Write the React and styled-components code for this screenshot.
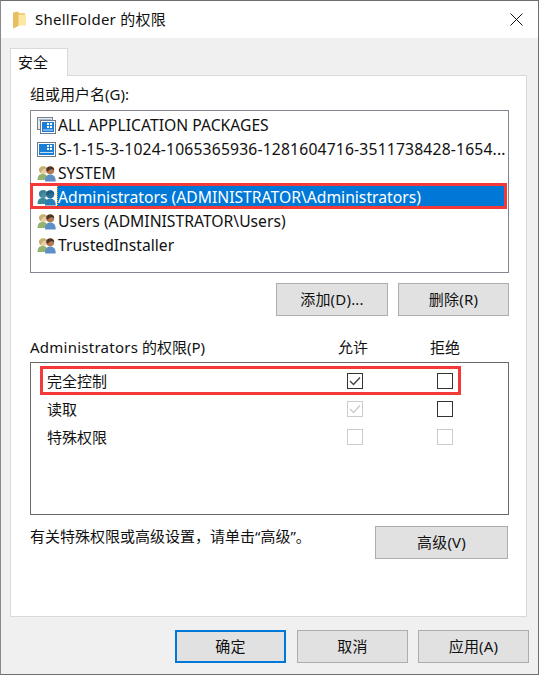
import React from "react";
import styled, { createGlobalStyle } from "styled-components";

const GlobalStyle = createGlobalStyle`
  html, body {
    margin: 0;
    padding: 0;
    background: #f0f0f0;
  }
  * {
    box-sizing: border-box;
  }
`;

const Win = styled.div`
  width: 539px;
  height: 675px;
  display: flex;
  flex-direction: column;
  background: #f0f0f0;
  border: 1px solid #6e6e6e;
  border-left-color: #8a8a8a;
  font-family: "Noto Sans", "Noto Sans CJK SC", sans-serif;
  font-size: 15px;
  color: #111;
  overflow: hidden;
`;

const TitleBar = styled.div`
  height: 37px;
  flex: none;
  display: flex;
  align-items: center;
  background: #fff;
  padding: 0 15px 0 12px;
`;

const TitleText = styled.span`
  margin: -2px 0 0 9px;
  font-size: 15px;
  letter-spacing: 0.25px;
`;

const CloseBtn = styled.svg`
  margin-left: auto;
  width: 13px;
  height: 13px;
`;

const Body = styled.div`
  flex: 1;
  display: flex;
  flex-direction: column;
  padding: 10px 11px 0 9px;
`;

const TabRow = styled.div`
  height: 28px;
  display: flex;
  flex: none;
`;

const Tab = styled.div`
  width: 58px;
  height: 28px;
  background: #fff;
  border: 1px solid #d9d9d9;
  border-bottom: none;
  display: flex;
  align-items: center;
  padding: 0 0 2px 7px;
  position: relative;
  z-index: 1;
`;

const Panel = styled.div`
  height: 542px;
  flex: none;
  background: #fff;
  border: 1px solid #d9d9d9;
  margin-top: -1px;
  padding: 6px 17px 0 19px;
  display: flex;
  flex-direction: column;
`;

const Label = styled.div`
  height: 24px;
  display: flex;
  align-items: center;
  padding-bottom: 2px;
`;

const UserList = styled.div`
  height: 163px;
  margin-top: 4px;
  border: 1px solid #828790;
  padding: 2px 2px 0 6px;
  position: relative;
`;

const UserRow = styled.div`
  height: 24px;
  display: flex;
  align-items: center;
  gap: 1px;
`;

const UserName = styled.span`
  flex: 1;
  height: 24px;
  line-height: 24px;
  padding-left: ${(p) => (p.$selected ? "0" : "1px")};
  border-left: ${(p) => (p.$selected ? "1px dotted #f0a030" : "none")};
  font-size: 15.7px;
  letter-spacing: ${(p) => (p.$wide ? "0.17px" : "0")};
  white-space: nowrap;
  overflow: hidden;
  background: ${(p) => (p.$selected ? "#0078d7" : "transparent")};
  color: ${(p) => (p.$selected ? "#fff" : "#111")};
`;

const Mark = styled.div`
  position: absolute;
  border: 3px solid #f53838;
  left: ${(p) => p.$left}px;
  top: ${(p) => p.$top}px;
  width: ${(p) => p.$w}px;
  height: ${(p) => p.$h}px;
  pointer-events: none;
`;

const ButtonRow = styled.div`
  display: flex;
  justify-content: flex-end;
  gap: 10px;
  margin-top: 10px;
`;

const Btn = styled.button`
  width: ${(p) => p.$w || 111}px;
  height: 33px;
  background: #e1e1e1;
  border: ${(p) => (p.$primary ? "2px solid #0078d7" : "1px solid #adadad")};
  font: inherit;
  letter-spacing: 0.2px;
  color: #111;
  padding: 0 0 2px;
`;

const PermHead = styled.div`
  display: grid;
  grid-template-columns: 293px 60px 124px;
  height: 24px;
  align-items: center;
  margin-top: 19px;
  padding-bottom: 2px;
`;

const HeadCell = styled.div`
  text-align: center;
`;

const AdminName = styled.span`
  letter-spacing: 0.25px;
`;

const PermBox = styled.div`
  height: 153px;
  margin-top: 3px;
  border: 1px solid #696969;
  padding-top: 4px;
  position: relative;
`;

const PermRow = styled.div`
  display: grid;
  grid-template-columns: 294px 60px 120px;
  height: 28px;
  align-items: center;
`;

const PermName = styled.div`
  padding: 0 0 2px 16px;
`;

const BoxCell = styled.div`
  display: flex;
  justify-content: center;
`;

const Check = styled.div`
  width: 16px;
  height: 16px;
  border: 1px solid ${(p) => (p.$disabled ? "#cccccc" : "#333333")};
  background: #fff;
  display: flex;
  align-items: center;
  justify-content: center;
`;

const AdvRow = styled.div`
  display: flex;
  align-items: flex-start;
  justify-content: space-between;
  margin-top: 11px;
`;

const Hint = styled.div`
  font-size: 15px;
  line-height: 20px;
`;

const AdvBtn = styled(Btn)`
  margin-right: 1px;
`;

const Footer = styled.div`
  display: flex;
  justify-content: flex-end;
  gap: 10px;
  margin: 13px -2px 0 0;
`;

const OkBtn = styled(Btn)`
  margin-right: 1px;
`;

const FolderIcon = () => (
  <svg width="13" height="18" viewBox="0 0 13 18">
    <path d="M0 2 H12 V14 H0 Z" fill="#f2cf78" />
    <path d="M3.5 4 H13 V14.5 H3.5 Z" fill="#fce7a5" />
    <path d="M0 1.5 L5.5 0.5 V15 L0 17.5 Z" fill="#e9be5e" />
  </svg>
);

const ScreenIcon = ({ layered }) =>
  layered ? (
    <svg width="19" height="17" viewBox="0 0 19 17">
      <rect x="0.5" y="0.5" width="15" height="12" fill="#e4ebf3" stroke="#7a7f85" />
      <rect x="2" y="2" width="12" height="2" fill="#a9bccd" />
      <rect x="3.5" y="3.5" width="15" height="13" fill="#fff" stroke="#6d7a88" />
      <rect x="5" y="5" width="12" height="10" fill="#1c7fd6" />
      <path d="M10 6h2v2h-2zM13 6h2v2h-2zM10 9h2v2h-2zM13 9h2v2h-2z" fill="#fff" />
      <rect x="6" y="12.5" width="10" height="1" fill="#bfe0f7" />
    </svg>
  ) : (
    <svg width="19" height="15" viewBox="0 0 19 15">
      <rect x="0.5" y="0.5" width="18" height="14" fill="#fff" stroke="#6d7a88" />
      <rect x="2" y="2" width="15" height="11" fill="#1c7fd6" />
      <path d="M10 3h2v2h-2zM13 3h2v2h-2zM10 6h2v2h-2zM13 6h2v2h-2z" fill="#fff" />
      <rect x="3" y="10" width="13" height="1" fill="#bfe0f7" />
    </svg>
  );

const GroupIcon = ({ selected }) => (
  <svg width="19" height="17" viewBox="0 0 19 17">
    <path d="M0.5 15 C0.5 10.5 2.5 9 6 9 C9.5 9 10.5 11 10.5 15 Z" fill={selected ? "#3a8a9a" : "#95b36e"} />
    <circle cx="6" cy="5" r="4" fill={selected ? "#4b8ea0" : "#e6cfa6"} />
    <path d="M2 5.5 C1.5 1 10 0 10 4 C7 3.5 5 4 4 8 Z" fill={selected ? "#3f8094" : "#c9ae72"} />
    <path d="M8 16.5 C8 11.5 10 9.5 13.2 9.5 C16.5 9.5 18.7 11.5 18.7 16.5 Z" fill={selected ? "#2a7fb8" : "#5c8fc6"} />
    <circle cx="13.2" cy="5.3" r="4" fill={selected ? "#2a6f95" : "#b5794f"} />
    <path d="M9.2 5.3 C8.8 0.5 17.5 0 17.2 5.3 C15 3.5 12 4 11 7 Z" fill={selected ? "#1f5a7d" : "#4a3428"} />
  </svg>
);

const Tick = ({ color }) => (
  <svg width="12" height="10" viewBox="0 0 12 10">
    <path d="M1 5 L4.5 8.5 L11 1.5" fill="none" stroke={color} strokeWidth="1.4" />
  </svg>
);

const users = [
  { name: "ALL APPLICATION PACKAGES", icon: "layered" },
  { name: "S-1-15-3-1024-1065365936-1281604716-3511738428-1654...", icon: "screen", wide: true },
  { name: "SYSTEM", icon: "group" },
  { name: "Administrators (ADMINISTRATOR\\Administrators)", icon: "group", selected: true },
  { name: "Users (ADMINISTRATOR\\Users)", icon: "group" },
  { name: "TrustedInstaller", icon: "group" },
];

const perms = [
  { name: "完全控制", allow: "on", deny: "off" },
  { name: "读取", allow: "disabledOn", deny: "off" },
  { name: "特殊权限", allow: "disabled", deny: "disabled" },
];

const CheckBox = ({ state }) => {
  const disabled = state === "disabled" || state === "disabledOn";
  return (
    <Check $disabled={disabled}>
      {state === "on" && <Tick color="#444" />}
      {state === "disabledOn" && <Tick color="#cccccc" />}
    </Check>
  );
};

export default function App() {
  return (
    <Win>
      <GlobalStyle />
      <TitleBar>
        <FolderIcon />
        <TitleText>ShellFolder 的权限</TitleText>
        <CloseBtn viewBox="0 0 13 13">
          <path d="M0.5 0.5 L12.5 12.5 M12.5 0.5 L0.5 12.5" stroke="#111" strokeWidth="1" fill="none" />
        </CloseBtn>
      </TitleBar>
      <Body>
        <TabRow>
          <Tab>安全</Tab>
        </TabRow>
        <Panel>
          <Label>组或用户名(G):</Label>
          <UserList>
            {users.map((u) => (
              <UserRow key={u.name}>
                {u.icon === "group" ? (
                  <GroupIcon selected={u.selected} />
                ) : (
                  <ScreenIcon layered={u.icon === "layered"} />
                )}
                <UserName $selected={u.selected} $wide={u.wide}>
                  {u.name}
                </UserName>
              </UserRow>
            ))}
            <Mark $left={-1} $top={72} $w={477} $h={26} />
          </UserList>
          <ButtonRow>
            <Btn $w={112}>添加(D)...</Btn>
            <Btn $w={111}>删除(R)</Btn>
          </ButtonRow>
          <PermHead>
            <div>
              <AdminName>Administrators</AdminName> 的权限(P)
            </div>
            <HeadCell>允许</HeadCell>
            <HeadCell>拒绝</HeadCell>
          </PermHead>
          <PermBox>
            {perms.map((p) => (
              <PermRow key={p.name}>
                <PermName>{p.name}</PermName>
                <BoxCell>
                  <CheckBox state={p.allow} />
                </BoxCell>
                <BoxCell>
                  <CheckBox state={p.deny} />
                </BoxCell>
              </PermRow>
            ))}
            <Mark $left={9} $top={3} $w={421} $h={29} />
          </PermBox>
          <AdvRow>
            <Hint>有关特殊权限或高级设置，请单击“高级”。</Hint>
            <AdvBtn $w={133}>高级(V)</AdvBtn>
          </AdvRow>
        </Panel>
        <Footer>
          <OkBtn $primary $w={111}>确定</OkBtn>
          <Btn $w={111}>取消</Btn>
          <Btn $w={111}>应用(A)</Btn>
        </Footer>
      </Body>
    </Win>
  );
}
